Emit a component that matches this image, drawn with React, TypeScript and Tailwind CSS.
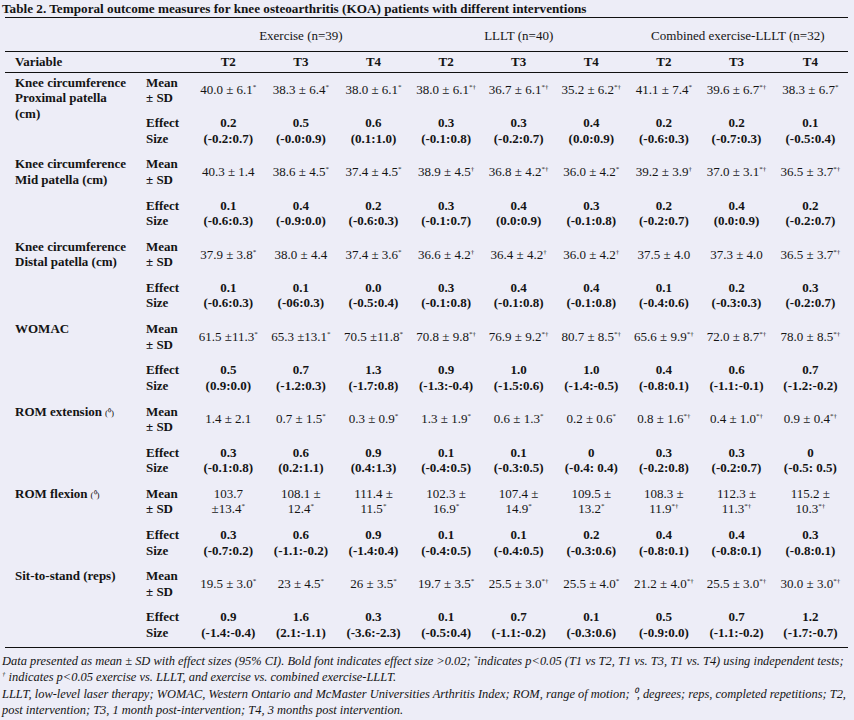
import React from "react"

type Mean = string | [string, string]

interface Outcome {
  name: string[]
  unit?: boolean
  mean: Mean[]
  effect: [string, string][]
}

// "value|marks" -> value with superscript marks
const outcomes: Outcome[] = [
  {
    name: ["Knee circumference", "Proximal patella", "(cm)"],
    mean: ["40.0 ± 6.1|*", "38.3 ± 6.4|*", "38.0 ± 6.1|*", "38.0 ± 6.1|*†", "36.7 ± 6.1|*†", "35.2 ± 6.2|*†", "41.1 ± 7.4|*", "39.6 ± 6.7|*†", "38.3 ± 6.7|*"],
    effect: [["0.2", "(-0.2:0.7)"], ["0.5", "(-0.0:0.9)"], ["0.6", "(0.1:1.0)"], ["0.3", "(-0.1:0.8)"], ["0.3", "(-0.2:0.7)"], ["0.4", "(0.0:0.9)"], ["0.2", "(-0.6:0.3)"], ["0.2", "(-0.7:0.3)"], ["0.1", "(-0.5:0.4)"]],
  },
  {
    name: ["Knee circumference", "Mid patella (cm)"],
    mean: ["40.3 ± 1.4", "38.6 ± 4.5|*", "37.4 ± 4.5|*", "38.9 ± 4.5|†", "36.8 ± 4.2|*†", "36.0 ± 4.2|*", "39.2 ± 3.9|†", "37.0 ± 3.1|*†", "36.5 ± 3.7|*†"],
    effect: [["0.1", "(-0.6:0.3)"], ["0.4", "(-0.9:0.0)"], ["0.2", "(-0.6:0.3)"], ["0.3", "(-0.1:0.7)"], ["0.4", "(0.0:0.9)"], ["0.3", "(-0.1:0.8)"], ["0.2", "(-0.2:0.7)"], ["0.4", "(0.0:0.9)"], ["0.2", "(-0.2:0.7)"]],
  },
  {
    name: ["Knee circumference", "Distal patella (cm)"],
    mean: ["37.9 ± 3.8|*", "38.0 ± 4.4", "37.4 ± 3.6|*", "36.6 ± 4.2|†", "36.4 ± 4.2|†", "36.0 ± 4.2|†", "37.5 ± 4.0", "37.3 ± 4.0", "36.5 ± 3.7|*†"],
    effect: [["0.1", "(-0.6:0.3)"], ["0.1", "(-06:0.3)"], ["0.0", "(-0.5:0.4)"], ["0.3", "(-0.1:0.8)"], ["0.4", "(-0.1:0.8)"], ["0.4", "(-0.1:0.8)"], ["0.1", "(-0.4:0.6)"], ["0.2", "(-0.3:0.3)"], ["0.3", "(-0.2:0.7)"]],
  },
  {
    name: ["WOMAC"],
    mean: ["61.5 ±11.3|*", "65.3 ±13.1|*", "70.5 ±11.8|*", "70.8 ± 9.8|*†", "76.9 ± 9.2|*†", "80.7 ± 8.5|*†", "65.6 ± 9.9|*†", "72.0 ± 8.7|*†", "78.0 ± 8.5|*†"],
    effect: [["0.5", "(0.9:0.0)"], ["0.7", "(-1.2:0.3)"], ["1.3", "(-1.7:0.8)"], ["0.9", "(-1.3:-0.4)"], ["1.0", "(-1.5:0.6)"], ["1.0", "(-1.4:-0.5)"], ["0.4", "(-0.8:0.1)"], ["0.6", "(-1.1:-0.1)"], ["0.7", "(-1.2:-0.2)"]],
  },
  {
    name: ["ROM extension"],
    unit: true,
    mean: ["1.4 ± 2.1", "0.7 ± 1.5|*", "0.3 ± 0.9|*", "1.3 ± 1.9|*", "0.6 ± 1.3|*", "0.2 ± 0.6|*", "0.8 ± 1.6|*†", "0.4 ± 1.0|*†", "0.9 ± 0.4|*†"],
    effect: [["0.3", "(-0.1:0.8)"], ["0.6", "(0.2:1.1)"], ["0.9", "(0.4:1.3)"], ["0.1", "(-0.4:0.5)"], ["0.1", "(-0.3:0.5)"], ["0", "(-0.4: 0.4)"], ["0.3", "(-0.2:0.8)"], ["0.3", "(-0.2:0.7)"], ["0", "(-0.5: 0.5)"]],
  },
  {
    name: ["ROM flexion"],
    unit: true,
    mean: [["103.7", "±13.4|*"], ["108.1 ±", "12.4|*"], ["111.4 ±", "11.5|*"], ["102.3 ±", "16.9|*"], ["107.4 ±", "14.9|*"], ["109.5 ±", "13.2|*"], ["108.3 ±", "11.9|*†"], ["112.3 ±", "11.3|*†"], ["115.2 ±", "10.3|*†"]],
    effect: [["0.3", "(-0.7:0.2)"], ["0.6", "(-1.1:-0.2)"], ["0.9", "(-1.4:0.4)"], ["0.1", "(-0.4:0.5)"], ["0.1", "(-0.4:0.5)"], ["0.2", "(-0.3:0.6)"], ["0.4", "(-0.8:0.1)"], ["0.4", "(-0.8:0.1)"], ["0.3", "(-0.8:0.1)"]],
  },
  {
    name: ["Sit-to-stand (reps)"],
    mean: ["19.5 ± 3.0|*", "23 ± 4.5|*", "26 ± 3.5|*", "19.7 ± 3.5|*", "25.5 ± 3.0|*†", "25.5 ± 4.0|*", "21.2 ± 4.0|*†", "25.5 ± 3.0|*†", "30.0 ± 3.0|*†"],
    effect: [["0.9", "(-1.4:-0.4)"], ["1.6", "(2.1:-1.1)"], ["0.3", "(-3.6:-2.3)"], ["0.1", "(-0.5:0.4)"], ["0.7", "(-1.1:-0.2)"], ["0.1", "(-0.3:0.6)"], ["0.5", "(-0.9:0.0)"], ["0.7", "(-1.1:-0.2)"], ["1.2", "(-1.7:-0.7)"]],
  },
]

const groups = ["Exercise (n=39)", "LLLT (n=40)", "Combined exercise-LLLT (n=32)"]

function Mark({ m }: { m: string }) {
  return <span className="relative -top-[5px] text-[7px] leading-none">{m}</span>
}

function Marked({ text }: { text: string }) {
  const [v, m] = text.split("|")
  return (
    <span className="whitespace-nowrap">
      {v}
      {m && <Mark m={m} />}
    </span>
  )
}

function MeanCell({ value }: { value: Mean }) {
  return (
    <td className="align-top pt-[2px] text-center">
      <div className="flex h-[31px] flex-col items-center justify-center">
        {typeof value === "string" ? (
          <Marked text={value} />
        ) : (
          <>
            <Marked text={value[0]} />
            <Marked text={value[1]} />
          </>
        )}
      </div>
    </td>
  )
}

export default function App() {
  return (
    <div
      className="min-h-[720px] w-[854px] bg-[#ededf7] text-[#141414] text-[13px] leading-[15.5px]"
      style={{ fontFamily: '"Liberation Serif", "Times New Roman", serif' }}
    >
      <div className="pl-[2px] pt-[1px] font-bold text-[13.2px] whitespace-nowrap">
        Table 2. Temporal outcome measures for knee osteoarthritis (KOA) patients with different interventions
      </div>

      <table className="ml-[5px] w-[843px] table-fixed border-collapse">
        <colgroup>
          <col className="w-[141px]" />
          <col className="w-[46px]" />
          {Array.from({ length: 8 }).map((_, i) => (
            <col key={i} className="w-[72.6px]" />
          ))}
          <col />
        </colgroup>
        <thead>
          <tr className="h-[34px] border-t border-b border-[#111]">
            <th colSpan={2} />
            {groups.map((g) => (
              <th key={g} colSpan={3} className="pt-[3px] text-center font-normal">
                {g}
              </th>
            ))}
          </tr>
          <tr className="h-[21px] border-b border-[#111]">
            <th className="pl-[10px] text-left font-bold">Variable</th>
            <th />
            {groups.map((g) =>
              ["T2", "T3", "T4"].map((t) => (
                <th key={g + t} className="text-center font-bold">
                  {t}
                </th>
              ))
            )}
          </tr>
        </thead>
        <tbody>
          {outcomes.map((o, oi) => (
            <React.Fragment key={oi}>
              <tr className="h-[41.2px]">
                <td rowSpan={2} className="align-top pl-[10px] pt-[2px] font-bold">
                  {o.name.map((n, i) => (
                    <div key={i} className="whitespace-nowrap">
                      {n}
                      {o.unit && i === 0 && <span className="ml-[3px] text-[9px] font-normal">(⁰)</span>}
                    </div>
                  ))}
                </td>
                <td className="align-top pt-[2px] font-bold">
                  <div>Mean</div>
                  <div>± SD</div>
                </td>
                {o.mean.map((m, i) => (
                  <MeanCell key={i} value={m} />
                ))}
              </tr>
              <tr className={oi === outcomes.length - 1 ? "h-[40px] border-b border-[#111]" : "h-[41.2px]"}>
                <td className="align-top pt-[2px] font-bold">
                  <div>Effect</div>
                  <div>Size</div>
                </td>
                {o.effect.map(([a, b], i) => (
                  <td key={i} className="align-top pt-[2px] text-center font-bold whitespace-nowrap">
                    <div>{a}</div>
                    <div>{b}</div>
                  </td>
                ))}
              </tr>
            </React.Fragment>
          ))}
        </tbody>
      </table>

      <div className="pl-[2px] pt-[5px] italic text-[12.45px] leading-[16.4px] whitespace-nowrap">
        <div>
          Data presented as mean ± SD with effect sizes (95% CI). Bold font indicates effect size &gt;0.02; <Mark m="*" />
          indicates p&lt;0.05 (T1 vs T2, T1 vs. T3, T1 vs. T4) using independent tests;
        </div>
        <div>
          <Mark m="†" /> indicates p&lt;0.05 exercise vs. LLLT, and exercise vs. combined exercise-LLLT.
        </div>
        <div>
          LLLT, low-level laser therapy; WOMAC, Western Ontario and McMaster Universities Arthritis Index; ROM, range of
          motion; ⁰, degrees; reps, completed repetitions; T2,
        </div>
        <div>post intervention; T3, 1 month post-intervention; T4, 3 months post intervention.</div>
      </div>
    </div>
  )
}
